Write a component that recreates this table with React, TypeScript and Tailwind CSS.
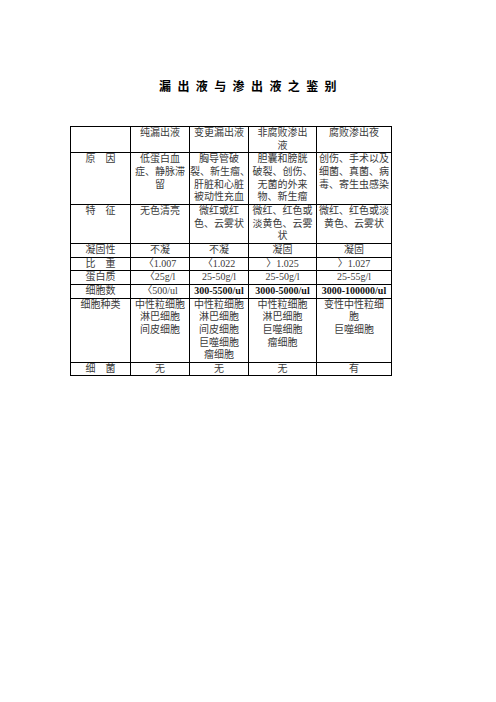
import React from 'react';

const rows: { label: string; cells: (string | string[])[]; bold?: boolean[] }[] = [
  {
    label: '原　因',
    cells: [
      ['低蛋白血', '症、静脉滞', '留'],
      ['胸导管破', '裂、新生瘤、', '肝脏和心脏', '被动性充血'],
      ['胆囊和膀胱', '破裂、创伤、', '无菌的外来', '物、新生瘤'],
      ['创伤、手术以及', '细菌、真菌、病', '毒、寄生虫感染'],
    ],
  },
  {
    label: '特　征',
    cells: [
      '无色清亮',
      ['微红或红', '色、云雾状'],
      ['微红、红色或', '淡黄色、云雾', '状'],
      ['微红、红色或淡', '黄色、云雾状'],
    ],
  },
  { label: '凝固性', cells: ['不凝', '不凝', '凝固', '凝固'] },
  { label: '比　重', cells: ['〈1.007', '〈1.022', '〉1.025', '〉1.027'] },
  { label: '蛋白质', cells: ['〈25g/l', '25-50g/l', '25-50g/l', '25-55g/l'] },
  {
    label: '细胞数',
    cells: ['〈500/ul', '300-5500/ul', '3000-5000/ul', '3000-100000/ul'],
    bold: [false, true, true, true],
  },
  {
    label: '细胞种类',
    cells: [
      ['中性粒细胞', '淋巴细胞', '间皮细胞'],
      ['中性粒细胞', '淋巴细胞', '间皮细胞', '巨噬细胞', '瘤细胞'],
      ['中性粒细胞', '淋巴细胞', '巨噬细胞', '瘤细胞'],
      ['变性中性粒细', '胞', '巨噬细胞'],
    ],
  },
  { label: '细　菌', cells: ['无', '无', '无', '有'] },
];

function Cell({ value, bold }: { value: string | string[]; bold?: boolean }) {
  const lines = Array.isArray(value) ? value : [value];
  return (
    <td className={`border border-black px-0 py-0 text-center align-top whitespace-nowrap ${bold ? 'font-semibold text-[#111]' : ''}`}>
      {lines.map((l, i) => (
        <div key={i}>{l}</div>
      ))}
    </td>
  );
}

export default function App() {
  return (
    <main
      className="min-h-screen w-full bg-white pt-[78px] text-black"
      style={{ fontFamily: '"Liberation Serif", "Noto Sans CJK SC", serif' }}
    >
      <h1 className="text-center text-[12px] leading-[16px] font-bold tracking-[6.4px] font-['Noto_Sans_CJK_SC',sans-serif] pl-[6px]">
        漏出液与渗出液之鉴别
      </h1>
      <table className="ml-[70px] mt-[32px] w-[321px] table-fixed border-collapse text-[10px] leading-[12.65px] text-[#3a3a3a]">
        <colgroup>
          <col className="w-[60px]" />
          <col className="w-[59px]" />
          <col className="w-[59px]" />
          <col className="w-[68px]" />
          <col className="w-[75px]" />
        </colgroup>
        <tbody>
          <tr>
            <Cell value="" />
            <Cell value="纯漏出液" />
            <Cell value="变更漏出液" />
            <Cell value={['非腐败渗出', '液']} />
            <Cell value="腐败渗出夜" />
          </tr>
          {rows.map((r) => (
            <tr key={r.label}>
              <Cell value={r.label} />
              {r.cells.map((c, i) => (
                <Cell key={i} value={c} bold={r.bold?.[i]} />
              ))}
            </tr>
          ))}
        </tbody>
      </table>
    </main>
  );
}
